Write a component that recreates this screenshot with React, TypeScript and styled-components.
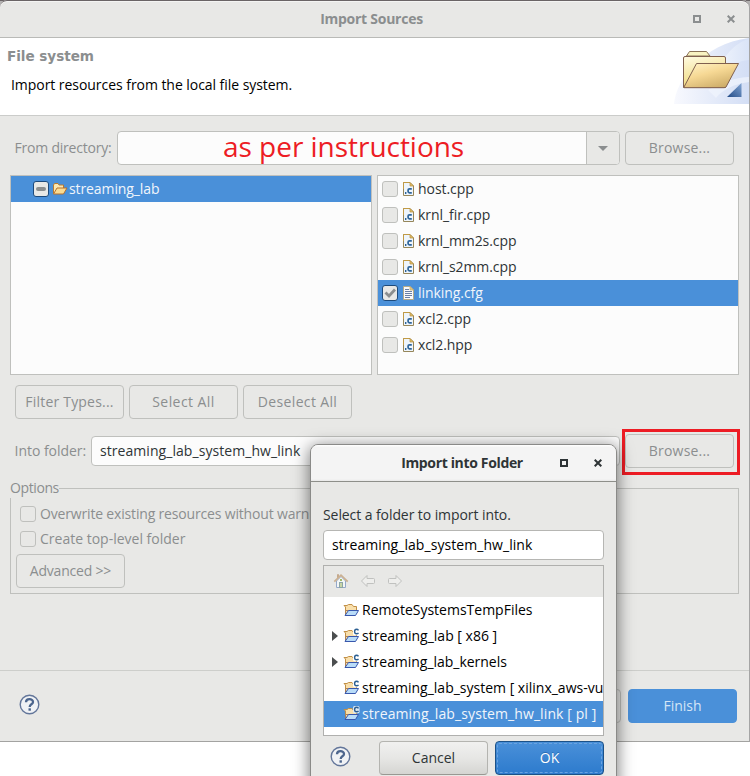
import React from 'react';
import styled, { createGlobalStyle, css } from 'styled-components';

const Global = createGlobalStyle`
  *, *::before, *::after { box-sizing: border-box; }
  html, body { margin: 0; padding: 0; background: #fff; overflow: hidden; }
  body { font: 14px/20px "Open Sans", "Noto Sans", sans-serif; color: #2e3436; }
  svg { display: block; flex: none; }
`;

const Screen = styled.div`
  position: relative;
  width: 750px;
  height: 776px;
  overflow: hidden;
  background: #fff;
`;

const Window = styled.main`
  height: 742px;
  display: flex;
  flex-direction: column;
  background: #e8e8e6;
  border-right: 1px solid #a5a5a5;
  border-bottom: 1px solid #a3a3a1;
  border-radius: 7px 7px 0 0;
  color: #8b8e8f;
`;

const Backdrop = styled.div`
  background: linear-gradient(#6a6466 0 1px, #b5b3b3 1px 10px, #fff 10px);
`;

const TitleBar = styled.header<{ $active?: boolean }>`
  flex: none;
  display: grid;
  grid-template-columns: ${p => (p.$active ? '66px 1fr 34px 34px' : '63px 1fr 34px 34px')};
  align-items: center;
  justify-items: center;
  height: ${p => (p.$active ? 37 : 38)}px;
  border-radius: 7px 7px 0 0;
  border-bottom: 1px solid ${p => (p.$active ? '#8e8f8a' : '#b9bab7')};
  ${p =>
    p.$active
      ? css`
          background: linear-gradient(#fdfdfd 0 1px, #f4f4f4 2px 34px, #e9e9e8);
          color: #2e3436;
          padding-right: 1px;
        `
      : css`
          background: #e8e8e6;
          border-top: 1px solid #6a6466;
          box-shadow: inset 0 1px #f4f4f3;
          color: #8b8e8f;
          padding-right: 1px;
        `}
`;

const Title = styled.h1<{ $track: number }>`
  margin: 0;
  font-size: 14px;
  font-weight: 700;
  line-height: 20px;
  letter-spacing: ${p => p.$track}px;
  white-space: nowrap;
`;

const Text = styled.span<{ $track?: number }>`
  letter-spacing: ${p => p.$track ?? 0}px;
  white-space: pre;
`;

const Banner = styled.section`
  flex: none;
  display: flex;
  justify-content: space-between;
  height: 78px;
  background: #fff;
  border-bottom: 1px solid #cbccca;
`;

const BannerCopy = styled.div`
  display: flex;
  flex-direction: column;
  padding: 8px 0 0 7px;
  gap: 9px;
  color: #000;
  p { margin: 0 0 0 4px; }
`;

const BannerTitle = styled.h2`
  margin: 0;
  font: bold 13.6px/20px "DejaVu Sans", sans-serif;
  letter-spacing: -0.05px;
  color: #8b8e8f;
`;

const Body = styled.div`
  flex: 1;
  display: flex;
  flex-direction: column;
  padding: 15px 10px 0;
`;

const Row = styled.div<{ $h: number; $gap?: number; $mt?: number; $indent?: number }>`
  flex: none;
  display: flex;
  align-items: center;
  height: ${p => p.$h}px;
  gap: ${p => p.$gap ?? 5}px;
  margin-top: ${p => p.$mt ?? 0}px;
  padding-left: ${p => p.$indent ?? 0}px;
`;

const FieldLabel = styled.label<{ $w: number }>`
  flex: none;
  width: ${p => p.$w}px;
  padding-left: 4.5px;
  white-space: nowrap;
`;

const Button = styled.button<{ $kind?: 'normal' | 'primary' | 'flat' }>`
  flex: none;
  display: flex;
  align-items: center;
  justify-content: center;
  width: 109px;
  height: 34px;
  padding: 0;
  border: 1px solid #bfc0bd;
  border-radius: 4px;
  background: #e8e8e6;
  color: #8b8e8f;
  font: inherit;
  ${p =>
    p.$kind === 'normal' &&
    css`
      border-color: #b4b4b0 #b4b4b0 #989892;
      background: linear-gradient(#f0f0ef 0 1px, #e6e6e4, #d5d5d2);
      color: #2e3436;
    `}
  ${p =>
    p.$kind === 'flat' &&
    css`
      border-color: #4a90d9;
      background: #4a90d9;
      color: #d5e5f6;
    `}
  ${p =>
    p.$kind === 'primary' &&
    css`
      border-color: #1c5187;
      background: linear-gradient(#4a90d9, #2d7bcd);
      color: #fff;
      outline: 1px dashed #6aa3e0;
      outline-offset: -3px;
      text-shadow: 0 -1px #2a6cb4;
    `}
`;

const Combo = styled.div`
  display: flex;
  width: 503px;
  height: 34px;
  border: 1px solid #bfc0bd;
  border-radius: 4px;
  background: #fcfcfc;
`;

const ComboValue = styled.div`
  flex: 1;
  display: flex;
  align-items: center;
  padding: 0 0 5px 105px;
  color: #ed1c24;
  font-size: 28px;
  line-height: 38px;
  height: 32px;
  letter-spacing: -0.03px;
  white-space: nowrap;
`;

const ComboArrow = styled.div`
  width: 33px;
  display: grid;
  place-items: center;
  border-left: 1px solid #bfc0bd;
  border-radius: 0 3px 3px 0;
  background: #e8e8e6;
`;

const TextField = styled.div<{ $w: number; $focus?: boolean }>`
  flex: none;
  width: ${p => p.$w}px;
  height: 30px;
  padding: 4px 8px;
  border: 1px solid ${p => (p.$focus ? '#b6b6b3' : '#bfc0bd')};
  border-radius: 4px;
  background: ${p => (p.$focus ? '#fff' : '#fcfcfc')};
  color: ${p => (p.$focus ? '#000' : '#2e3436')};
`;

const Panes = styled.div`
  flex: none;
  display: grid;
  grid-template-columns: 362px 362px;
  gap: 5px;
  height: 200px;
  margin-top: 10px;
`;

const List = styled.ul`
  margin: 0;
  padding: 0;
  list-style: none;
  overflow: hidden;
  border: 1px solid #bfc0bd;
  background: #fcfcfc;
`;

const Item = styled.li<{ $selected?: boolean; $indent: number }>`
  display: flex;
  align-items: center;
  height: 26px;
  padding-left: ${p => p.$indent}px;
  background: ${p => (p.$selected ? '#4a90d9' : 'transparent')};
  color: ${p => (p.$selected ? '#f0f5fb' : 'inherit')};
  white-space: nowrap;
`;

const FileItem = styled(Item)`
  color: ${p => (p.$selected ? '#f0f5fb' : '#2e3436')};
  svg { margin: 0 3px 0 4px; }
`;

const Check = styled.span<{ $strong?: boolean }>`
  flex: none;
  display: grid;
  place-items: center;
  width: 16px;
  height: 16px;
  border: 1px solid ${p => (p.$strong ? '#1c4a7c' : '#bfc0bd')};
  border-radius: 3px;
  background: #e8e8e6;
  && svg { margin: 0; }
`;

const Marked = styled.div`
  flex: none;
  display: flex;
  width: 118px;
  height: 46px;
  margin-left: -3px;
  padding: 2px 0 0;
  border: 3px solid #ed1c24;
`;

const FolderRow = styled(Row)`
  align-items: flex-start;
  label { padding-top: 12px; }
  ${TextField} { margin-top: 7px; }
`;

const Options = styled.fieldset`
  flex: none;
  display: flex;
  flex-direction: column;
  width: 729px;
  height: 116px;
  margin: 3px 0 0;
  padding: 0 0 0 5px;
  border: 1px solid #bfc0bd;
  color: inherit;
  min-width: 0;
`;

const Legend = styled.legend`
  margin-left: -6px;
  padding: 0;
  height: 20px;
`;

const Footer = styled.footer<{ $modal?: boolean }>`
  flex: none;
  display: flex;
  align-items: center;
  ${p =>
    p.$modal
      ? css`
          height: 44px;
          padding-left: 6px;
          gap: 7px;
        `
      : css`
          height: 71px;
          border-top: 1px solid #cdcecb;
          padding: 0 12px 0 18px;
          gap: 7px;
        `}
`;

const HelpSlot = styled.span`
  flex: 1;
  padding: 0 0 4px 0.5px;
`;

const Dialog = styled.section`
  position: absolute;
  left: 310px;
  top: 444px;
  width: 307px;
  height: 360px;
  border: 1px solid #8a8a88;
  border-radius: 8px 8px 0 0;
  background: #e8e8e6;
  color: #2e3436;
  box-shadow: 0 3px 16px 1px rgba(0, 0, 0, 0.5);
`;

const DialogBody = styled.div`
  display: flex;
  flex-direction: column;
  padding: 23px 12px 0;
`;

const Prompt = styled.p`
  margin: 0 0 5px;
  height: 20px;
`;

const Tree = styled.div`
  height: 171px;
  margin-top: 5px;
  overflow: hidden;
  border: 1px solid #b0b0ae;
  background: #fff;
  color: #000;
`;

const TreeTools = styled.div`
  display: flex;
  align-items: center;
  height: 31px;
  padding: 0 0 1px 9px;
  gap: 11px;
  background: #e8e8e6;
`;

const TreeItem = styled(Item)`
  svg { margin-right: 2px; }
`;

const Twisty = styled.span`
  flex: none;
  width: 11px;
  && svg { margin: 0; }
`;

const MaxIcon = () => (
  <svg width="8" height="8"><rect x="1" y="1" width="6" height="6" fill="none" stroke="currentColor" strokeWidth="2" /></svg>
);
const CloseIcon = () => (
  <svg width="8" height="8"><path d="M.7 .7L7.3 7.3M7.3 .7L.7 7.3" fill="none" stroke="currentColor" strokeWidth="2" /></svg>
);

const HelpIcon = () => (
  <svg width="21" height="21" viewBox="0 0 21 21">
    <circle cx="10.5" cy="10.5" r="9.3" fill="#f0f2f5" stroke="#63769a" strokeWidth="1.4" />
    <path d="M7 8.2C7 4.2 14 4.2 14 7.9C14 10.4 10.7 10.2 10.7 12.9" fill="none" stroke="#4c658d" strokeWidth="2.3" />
    <rect x="9.5" y="14.3" width="2.4" height="2.4" fill="#4c658d" />
  </svg>
);

const BannerArt = () => (
  <svg width="75" height="67" viewBox="0 0 75 67">
    <defs>
      <linearGradient id="sky" x1="0" x2="1"><stop offset="0" stopColor="#f8f9fe" /><stop offset="1" stopColor="#d3def5" /></linearGradient>
      <linearGradient id="sky2" x1="0" x2="1"><stop offset="0" stopColor="#eef3fc" /><stop offset="1" stopColor="#dae4f7" /></linearGradient>
      <linearGradient id="front" x1="0.2" y1="0" x2="0.8" y2="1"><stop offset="0" stopColor="#fff0c0" /><stop offset=".4" stopColor="#f6d894" /><stop offset="1" stopColor="#c9a864" /></linearGradient>
      <linearGradient id="back" x1="0" y1="0" x2="0.3" y2="1"><stop offset="0" stopColor="#fffbe2" /><stop offset="1" stopColor="#efd878" /></linearGradient>
      <linearGradient id="corner" x1="0" y1="1" x2="1" y2="0"><stop offset="0" stopColor="#234b87" /><stop offset="1" stopColor="#82a5d3" /></linearGradient>
    </defs>
    <path d="M0 66C2 42 28 6 75 0V66Z" fill="url(#sky)" />
    <path d="M46 28C54 12 64 4 75 1V22C65 23 55 27 46 34Z" fill="url(#sky2)" />
    <path d="M34 52C48 44 63 39 75 39V44C60 46 48 52 42 60Z" fill="#f1f5fd" opacity=".7" />
    <path d="M12.5 18L15.5 13.5H32.5L36 18Z" fill="#f9f3c2" stroke="#8a7257" />
    <path d="M9.5 20Q9.5 18.5 11 18.5H50Q51.5 18.5 51.5 20V49.5H9.5Z" fill="url(#back)" stroke="#80604f" />
    <path d="M10 49L22.5 25.5H64.5L52 49Q51.5 49.7 50 49.7H10Z" fill="url(#front)" stroke="#80604f" strokeLinejoin="round" />
    <path d="M53 59L67.5 45V59Z" fill="url(#corner)" />
  </svg>
);

const SourceIcon = () => (
  <svg width="13" height="16" viewBox="0 0 13 16">
    <path d="M1.5 1.5H8L11.5 5V14.5H1.5Z" fill="#eef5fc" stroke="#96865a" />
    <path d="M1.5 8V1.5H8" fill="none" stroke="#c19a45" />
    <path d="M8 1.5V5H11.5Z" fill="#e4c06c" stroke="#b68e39" strokeWidth=".7" />
    <rect x="3" y="11" width="1.4" height="2" fill="#2b6295" />
    <path d="M9.8 7.8H7.5Q6.1 7.8 6.1 9V10.6Q6.1 11.9 7.5 11.9H9.8" fill="none" stroke="#2e659b" strokeWidth="1.7" />
  </svg>
);

const ConfigIcon = () => (
  <svg width="13" height="16" viewBox="0 0 13 16">
    <path d="M1.5 1.5H8L11.5 5V14.5H1.5Z" fill="#f8fafd" stroke="#b4aa8a" />
    <path d="M8 1.5V5H11.5Z" fill="#ead08b" stroke="#c7a65d" strokeWidth=".7" />
    <path d="M3 4.5H7M3 6.5H10M3 8.5H10M3 10.5H10M3 12.5H8" stroke="#6980a5" />
  </svg>
);

const FolderIcon = () => (
  <svg width="16" height="14" viewBox="0 0 16 14">
    <path d="M1.5 11.5V3L2.5 1.5H6L7 3H11.5V6" fill="#fbe7b0" stroke="#b77a31" />
    <path d="M1.5 12L5 6H15L11.5 12Z" fill="#fbdc92" stroke="#b5702d" strokeLinejoin="round" />
  </svg>
);

const ProjectIcon = ({ c, selected }: { c?: boolean; selected?: boolean }) => (
  <svg width="17" height="16" viewBox="0 0 17 16">
    <path d="M2.5 12.5V5L1 3.5H4L5.5 2.5H9L10.5 4.5H13.5V8" fill="#f9dfab" stroke="#c18f45" />
    <path d="M2.5 13.5V8.5H5.5L6.5 10" fill="#f9dfab" stroke="#b08251" />
    <path d="M2 13.5L5.5 8.5H15.5L12.5 13.5Z" fill="#b9dcf8" stroke="#3857ad" strokeLinejoin="round" />
    {c && (
      <>
        <rect x="10" y="0" width="6.5" height="7.2" rx="1.5" fill={selected ? '#dce8f5' : '#fff'} />
        <path d="M15.5 2.4Q14.8 1.3 13.5 1.3Q11.6 1.3 11.6 3.6Q11.6 5.8 13.5 5.8Q14.8 5.8 15.5 4.8" fill="none" stroke="#2b5f92" strokeWidth="1.4" />
      </>
    )}
  </svg>
);

const HomeIcon = () => (
  <svg width="16" height="16" viewBox="0 0 16 16">
    <path d="M3.5 8V14.5H12.5V8L8 3.5Z" fill="#f3f6f6" stroke="#95a9ca" />
    <path d="M4.5 5V1.5H5.5V4" fill="none" stroke="#c5a98c" />
    <path d="M1.3 8.7L8 2.2L14.7 8.7" fill="none" stroke="#cbb193" strokeWidth="1.8" />
    <rect x="6.5" y="9.5" width="3" height="5" fill="#c8d5a6" stroke="#8da6a5" />
    <rect x="7" y="6" width="2" height="2" fill="#a2b96c" />
  </svg>
);

const ArrowIcon = ({ right }: { right?: boolean }) => (
  <svg width="16" height="14" viewBox="0 0 16 14">
    <path
      d={right ? 'M14.5 7L9 1.5V4.5H2.5Q1.5 4.5 1.5 5.5V8.5Q1.5 9.5 2.5 9.5H9V12.5Z' : 'M1.5 7L7 1.5V4.5H13.5Q14.5 4.5 14.5 5.5V8.5Q14.5 9.5 13.5 9.5H7V12.5Z'}
      fill="#eeeeec" stroke="#c0c1bf" strokeLinejoin="round"
    />
  </svg>
);

const files = [
  { name: 'host.cpp', track: -0.05 },
  { name: 'krnl_fir.cpp', track: -0.05 },
  { name: 'krnl_mm2s.cpp', track: -0.08 },
  { name: 'krnl_s2mm.cpp', track: -0.08 },
  { name: 'linking.cfg', track: -0.06, config: true },
  { name: 'xcl2.cpp', track: 0 },
  { name: 'xcl2.hpp', track: -0.08 },
];

const projects = [
  { name: 'RemoteSystemsTempFiles', track: 0, c: false },
  { name: 'streaming_lab [ x86 ]', track: 0, c: true, children: true },
  { name: 'streaming_lab_kernels', track: -0.03, c: true, children: true },
  { name: 'streaming_lab_system [ xilinx_aws-vu', track: 0, c: true },
  { name: 'streaming_lab_system_hw_link [ pl ]', track: 0.1, c: true, selected: true },
];

function ImportDialog() {
  return (
    <Dialog>
      <TitleBar $active>
        <span />
        <Title $track={-0.35}>Import into Folder</Title>
        <MaxIcon />
        <CloseIcon />
      </TitleBar>
      <DialogBody>
        <Prompt><Text $track={-0.08}>Select a folder to import into.</Text></Prompt>
        <TextField $w={281} $focus><Text $track={0.06}>streaming_lab_system_hw_link</Text></TextField>
        <Tree>
          <TreeTools><HomeIcon /><ArrowIcon /><ArrowIcon right /></TreeTools>
          {projects.map(p => (
            <TreeItem key={p.name} $indent={8} $selected={p.selected}>
              <Twisty>
                {p.children && <svg width="6" height="10"><path d="M0 0L6 5L0 10Z" fill="#4b4e4f" /></svg>}
              </Twisty>
              <ProjectIcon c={p.c} selected={p.selected} />
              <Text $track={p.track}>{p.name}</Text>
            </TreeItem>
          ))}
        </Tree>
        <Footer $modal>
          <HelpSlot><HelpIcon /></HelpSlot>
          <Button $kind="normal">Cancel</Button>
          <Button $kind="primary">OK</Button>
        </Footer>
      </DialogBody>
    </Dialog>
  );
}

export default function App() {
  return (
    <Screen>
      <Global />
      <Backdrop>
        <Window>
          <TitleBar>
            <span />
            <Title $track={-0.26}>Import Sources</Title>
            <MaxIcon />
            <CloseIcon />
          </TitleBar>
          <Banner>
            <BannerCopy>
              <BannerTitle>File system</BannerTitle>
              <p><Text $track={-0.05}>Import resources from the local file system.</Text></p>
            </BannerCopy>
            <BannerArt />
          </Banner>
          <Body>
            <Row $h={34}>
              <FieldLabel $w={102}><Text $track={-0.21}>From directory:</Text></FieldLabel>
              <Combo>
                <ComboValue>as per instructions</ComboValue>
                <ComboArrow><svg width="10" height="5"><path d="M0 0H10L5 5Z" fill="#8b8e8f" /></svg></ComboArrow>
              </Combo>
              <Button><Text $track={0.2}>Browse...</Text></Button>
            </Row>
            <Panes>
              <List>
                <Item $indent={22} $selected>
                  <Check $strong><svg width="10" height="4"><rect width="10" height="4" rx="2" fill="#8b8e8f" /></svg></Check>
                  <Row $h={26} $gap={1} $indent={3}>
                    <FolderIcon />
                    <Text $track={-0.1}>streaming_lab</Text>
                  </Row>
                </Item>
              </List>
              <List>
                {files.map(f => (
                  <FileItem key={f.name} $indent={4} $selected={f.config}>
                    <Check $strong={f.config}>
                      {f.config && <svg width="12" height="10"><path d="M1.5 4.5L5 8L11 1.5" fill="none" stroke="#8b8e8f" strokeWidth="2.8" /></svg>}
                    </Check>
                    {f.config ? <ConfigIcon /> : <SourceIcon />}
                    <Text $track={f.track}>{f.name}</Text>
                  </FileItem>
                ))}
              </List>
            </Panes>
            <Row $h={34} $mt={10} $indent={5}>
              <Button><Text $track={0.2}>Filter Types...</Text></Button>
              <Button><Text $track={0.43}>Select All</Text></Button>
              <Button><Text $track={0.35}>Deselect All</Text></Button>
            </Row>
            <FolderRow $h={46} $mt={10}>
              <FieldLabel $w={76}><Text $track={-0.03}>Into folder:</Text></FieldLabel>
              <TextField $w={529}><Text $track={0.06}>streaming_lab_system_hw_link</Text></TextField>
              <Marked><Button><Text $track={0.2}>Browse...</Text></Button></Marked>
            </FolderRow>
            <Options>
              <Legend><Text $track={-0.4}>Options</Text></Legend>
              <Row $h={25} $mt={3} $indent={4} $gap={4}>
                <Check /><Text $track={-0.17}>Overwrite existing resources without warning</Text>
              </Row>
              <Row $h={25} $indent={4} $gap={4}>
                <Check /><Text>Create top-level folder</Text>
              </Row>
              <Row $h={34} $mt={3}><Button><Text $track={-0.2}>Advanced &gt;&gt;</Text></Button></Row>
            </Options>
          </Body>
          <Footer>
            <HelpSlot><HelpIcon /></HelpSlot>
            <Button aria-label="Cancel" />
            <Button $kind="flat">Finish</Button>
          </Footer>
        </Window>
      </Backdrop>
      <ImportDialog />
    </Screen>
  );
}
